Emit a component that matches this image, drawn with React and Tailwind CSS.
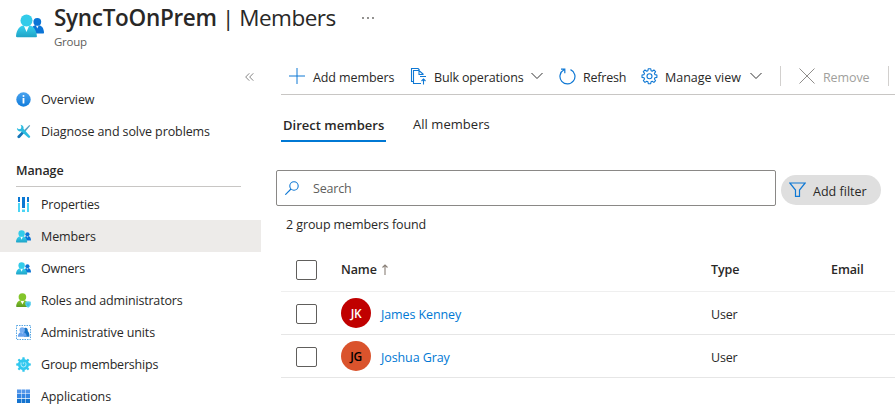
import React from "react";

function PeopleIcon({ className, id }) {
  return (
    <svg viewBox="0 0 28 24" className={className}>
      <defs>
        <linearGradient id={`${id}-front`} x1="0" y1="0" x2="0" y2="1">
          <stop offset="0" stopColor="#38d4f2" />
          <stop offset="1" stopColor="#1fa3c6" />
        </linearGradient>
      </defs>
      <path d="M15 19.500h12c.7 0 1-.4 1-1-.4-4.600-2.200-7.500-6.800-7.500-3.500 0-5.400 1.800-6.200 5z" fill="#0a74d6" />
      <path d="M19.800 11.300l1.500 3.200 1.500-3.200z" fill="#fff" />
      <circle cx="21.300" cy="7.800" r="3.900" fill="#0a74d6" />
      <path d="M1.200 23.200h18.600c.8 0 1.200-.5 1.100-1.300C20.200 15.500 17.500 11 10.500 11S.8 15.500 0 21.900c-.1.800.4 1.300 1.200 1.300z" fill={`url(#${id}-front)`} />
      <path d="M8 12l2.500 6 2.500-6z" fill="#fff" />
      <circle cx="10.500" cy="6.500" r="6" fill="#33cbe9" />
    </svg>
  );
}

function InfoIcon() {
  return (
    <svg viewBox="0 0 15 15" className="h-[15px] w-[15px]">
      <defs>
        <linearGradient id="info" x1="0" y1="0" x2="0" y2="1">
          <stop offset="0" stopColor="#4ba3ee" />
          <stop offset="1" stopColor="#0f7bdb" />
        </linearGradient>
      </defs>
      <circle cx="7.500" cy="7.500" r="7.200" fill="url(#info)" />
      <circle cx="7.500" cy="4" r="1" fill="#fff" />
      <rect x="6.600" y="6" width="1.800" height="5.600" rx=".4" fill="#fff" />
    </svg>
  );
}

function ToolsIcon() {
  return (
    <svg viewBox="0 0 15 15" className="h-[15px] w-[15px]">
      <path d="M13.300.9l.9.900-4.800 5.700-1.300-1.300z" fill="#5a9fc0" />
      <path d="M7.500 6l1.800 1.800-5.400 6c-.6.600-1.500.6-2.100 0s-.6-1.500 0-2.100z" fill="#1475b8" />
      <path d="M4.500.7c2.200.2 3.500 2 3 4l6.400 7.200c.5.500.4 1.200-.1 1.700-.5.500-1.200.500-1.700 0L5 7.300C3 7.800.9 6.400.9 4l2 1.300 2-.5.500-2z" fill="#2bbbe0" />
    </svg>
  );
}

function PropertiesIcon() {
  return (
    <svg viewBox="0 0 15 15" className="h-[15px] w-[15px]">
      <path d="M2 0h2v5H2zM6 0h3v11H6zM11 0h2v5h-2z" fill="#0b78d4" />
      <path d="M2 6h2v9H2zM6 12.500h3V15H6zM11 6h2v9h-2z" fill="#4bd5f5" />
    </svg>
  );
}

function RolesIcon() {
  return (
    <svg viewBox="0 0 15 15" className="h-[15px] w-[15px]">
      <defs>
        <linearGradient id="roles" x1="0" y1="0" x2="0" y2="1">
          <stop offset="0" stopColor="#8ccb2c" />
          <stop offset="1" stopColor="#5b9a20" />
        </linearGradient>
      </defs>
      <path d="M.9 14h11c.5 0 .7-.3.700-.8C12.200 9.500 10.500 7 6.400 7S.6 9.500.1 13.200c0 .500.300.8.800.8z" fill="url(#roles)" />
      <path d="M4.600 7.700l1.800 3.900 1.800-3.900z" fill="#fff" />
      <circle cx="6.400" cy="4" r="3.800" fill="#83c52a" />
      <path d="M9.300 8.800c2-.7 3.700-.7 5.500 0v2.500c0 1.500-1.300 2.700-2.700 3.500-1.500-.8-2.800-2-2.800-3.500z" fill="#53cdea" />
      <path d="M10.500 11h3M11 12.200h2" stroke="#1b9ccc" strokeWidth=".5" />
    </svg>
  );
}

function UnitsIcon() {
  return (
    <svg viewBox="0 0 15 15" className="h-[15px] w-[15px]">
      <rect x=".5" y=".5" width="14" height="14" fill="none" stroke="#5aa8e4" strokeDasharray="1.500 1" />
      <path d="M7.500 3.500c2.500-1.800 4.900.3 4.200 2.500 1.300 1 1.800 3 1.700 5.700H8z" fill="#1672c4" />
      <circle cx="6.200" cy="5" r="2.700" fill="#77aef2" />
      <path d="M1.800 11.700C2 9 3.400 7 6.200 7s4.400 2 4.600 4.700z" fill="#66a2ee" />
      <path d="M5.400 7.600l.8 1.400.9-1.400z" fill="#b5d3fa" />
    </svg>
  );
}

function MembershipIcon() {
  return (
    <svg viewBox="0 0 15 15" className="h-[15px] w-[15px]">
      <g fill="#32c8ee">
        <circle cx="7.500" cy="7.500" r="5.500" />
        <rect x="6.300" y=".2" width="2.400" height="14.600" rx=".6" />
        <rect x=".2" y="6.300" width="14.600" height="2.400" rx=".6" />
        <rect x="6.300" y=".2" width="2.400" height="14.600" rx=".6" transform="rotate(45 7.500 7.500)" />
        <rect x="6.300" y=".2" width="2.400" height="14.600" rx=".6" transform="rotate(-45 7.500 7.500)" />
      </g>
      <path d="M5 5.500v2a2.500 2.500 0 0 0 5 0c0-1-.4-1.800-1.200-2.300M7.300 5.300v1.900" fill="none" stroke="#c5f2ff" strokeWidth=".9" />
    </svg>
  );
}

function AppsIcon() {
  return (
    <svg viewBox="0 0 15 15" className="h-[15px] w-[15px]">
      <path d="M1 .5h4v4H1zM5.500.5h4v4h-4zM10 .5h4v4h-4z" fill="#5296ea" />
      <path d="M1 5.100h4v4H1zM5.500 5.100h4v4h-4zM10 5.100h4v4h-4z" fill="#3485e2" />
      <path d="M1 9.700h4v4.300H1zM5.500 9.700h4v4.300h-4zM10 9.700h4v4.300h-4z" fill="#1473cf" />
    </svg>
  );
}

function Chevron() {
  return (
    <svg viewBox="0 0 12 8" className="h-2 w-3" fill="none" stroke="#333" strokeWidth="1">
      <path d="M.5 1L6 6.500 11.500 1" />
    </svg>
  );
}

function NavItem({ icon, label, active, tracking = "" }) {
  return (
    <li className={`flex h-8 w-[261px] items-center pl-4 ${active ? "bg-[#edebe9]" : ""}`}>
      <span className="flex w-[25px] shrink-0">{icon}</span>
      <span className={`whitespace-nowrap pt-px ${tracking}`}>{label}</span>
    </li>
  );
}

function Sidebar() {
  return (
    <nav className="w-[270px] shrink-0">
      <div className="flex h-[30px] items-center pl-[245px] pt-[17px]">
        <svg viewBox="0 0 9 8" className="h-2 w-[9px] shrink-0" fill="none" stroke="#777" strokeWidth=".9">
          <path d="M4.300.3L.7 4l3.600 3.700M8.300.3L4.700 4l3.600 3.700" />
        </svg>
      </div>
      <ul>
        <NavItem icon={<InfoIcon />} label="Overview" />
        <NavItem icon={<ToolsIcon />} label="Diagnose and solve problems" />
      </ul>
      <div className="ml-4 mt-[7px] flex h-[33px] w-[225px] items-center border-b border-[#c8c6c4] pt-[2px] font-semibold">
        Manage
      </div>
      <ul className="mt-px">
        <NavItem icon={<PropertiesIcon />} label="Properties" tracking="tracking-[-0.2px]" />
        <NavItem active icon={<PeopleIcon id="members" className="h-[13px] w-[15px]" />} label="Members" />
        <NavItem icon={<PeopleIcon id="owners" className="h-[13px] w-[15px]" />} label="Owners" tracking="tracking-[-0.2px]" />
        <NavItem icon={<RolesIcon />} label="Roles and administrators" tracking="tracking-[-0.18px]" />
        <NavItem icon={<UnitsIcon />} label="Administrative units" tracking="tracking-[-0.13px]" />
        <NavItem icon={<MembershipIcon />} label="Group memberships" tracking="tracking-[-0.2px]" />
        <NavItem icon={<AppsIcon />} label="Applications" />
      </ul>
    </nav>
  );
}

function Toolbar() {
  return (
    <div className="ml-[11px] flex h-[42px] items-center whitespace-nowrap border-b border-[#c8c6c4] pt-[5px]">
      <div className="flex w-[129px] shrink-0 items-center pl-2">
        <svg viewBox="0 0 16 16" className="mr-2 h-4 w-4" stroke="#0f78d4" strokeWidth="1">
          <path d="M8 0v16M0 8h16" />
        </svg>
        <span className="pt-[3px]">Add members</span>
      </div>
      <div className="flex w-[149px] shrink-0 items-center">
        <svg viewBox="0 0 17 17" className="mr-[7px] h-[17px] w-[17px]" fill="none" stroke="#0f78d4" strokeWidth="1.100">
          <path d="M3.500 13.500h-2V.5H8l1.500 1.500M11 15.500H3.500v-13H9l4.500 4M9 2.500v4h4.500M13.500 16.500V11M11.500 13l2-2 2 2M10 8.500h6" />
        </svg>
        <span className="w-[97px] pt-[3px] tracking-[-0.15px]">Bulk operations</span>
        <Chevron />
      </div>
      <div className="flex w-[82px] shrink-0 items-center">
        <svg viewBox="0 0 17 17" className="mr-[7px] h-[17px] w-[17px]" fill="none" stroke="#0f78d4" strokeWidth="1.200">
          <path d="M11.500 1.600A7.500 7.500 0 1 1 5 1.800M2 1.200h3.800v4" />
        </svg>
        <span className="pt-[3px] tracking-[-0.2px]">Refresh</span>
      </div>
      <div className="flex w-[139px] shrink-0 items-center">
        <svg viewBox="0 0 17 17" className="mr-[7px] h-[17px] w-[17px]" fill="none" stroke="#0f78d4" strokeWidth="1.100" strokeLinejoin="round">
          <path d="M7.300.7h2.400l.4 2 1.100.5 1.700-1.200 1.700 1.700-1.200 1.700.5 1.200 2 .4v2.400l-2 .4-.5 1.200 1.200 1.700-1.700 1.700-1.700-1.200-1.100.5-.4 2H7.300l-.4-2-1.200-.5L4 14.400l-1.700-1.700L3.500 11 3 9.800l-2-.4V7l2-.4.5-1.200-1.200-1.700L4 2l1.700 1.200 1.200-.5z" />
          <circle cx="8.500" cy="8.200" r="2.500" />
        </svg>
        <span className="w-[85px] pt-[3px] tracking-[0px]">Manage view</span>
        <Chevron />
      </div>
      <div className="flex h-5 w-[109px] shrink-0 items-center border-x border-[#d2d0ce] pl-[18px] text-[#a19f9d]">
        <svg viewBox="0 0 16 16" className="mr-2 h-4 w-4 shrink-0" stroke="#8f8d8b" strokeWidth="1">
          <path d="M.5.5l15 15M15.500.5l-15 15" />
        </svg>
        <span className="pt-[3px]">Remove</span>
      </div>
    </div>
  );
}

function Checkbox() {
  return <span className="h-5 w-[21px] shrink-0 rounded-xs border border-[#605e5c] bg-white" />;
}

function MemberRow({ initials, name, avatar }) {
  return (
    <div className="flex h-[43px] items-center border-b border-[#e6e6e6] pl-[15px] pt-[2px]">
      <Checkbox />
      <span className={`mb-[3px] ml-6 flex h-[30px] w-[30px] shrink-0 items-center justify-center rounded-full pt-[2px] text-[12px] font-semibold tracking-[-0.4px] ${avatar}`}>
        {initials}
      </span>
      <span className="w-[340px] shrink-0 pl-[10px] pt-[2px] text-[#0078d4]">{name}</span>
      <span className="pt-[2px] tracking-[-0.2px]">User</span>
    </div>
  );
}

function Members() {
  return (
    <main className="min-w-0 flex-1">
      <Toolbar />
      <div className="ml-[11px] flex h-[47px]">
        <div className="flex w-[105px] items-center whitespace-nowrap border-b-2 border-[#0078d4] pl-[2px] pt-[14px] text-[13px] font-semibold tracking-[0.02px]">
          Direct members
        </div>
        <div className="flex items-center whitespace-nowrap pl-[27px] pt-[10px] text-[13px] tracking-[0.04px]">All members</div>
      </div>
      <div className="ml-[6px] mt-[28px] flex h-9 items-center">
        <div className="flex h-9 w-[500px] shrink-0 items-center rounded-xs border border-[#8a8886] pl-2 text-[#605e5c]">
          <svg viewBox="0 0 14 14" className="mr-[14px] h-[14px] w-[14px]" fill="none" stroke="#0f78d4" strokeWidth="1.100">
            <circle cx="9" cy="5" r="4.200" />
            <path d="M6 8L.3 13.700" />
          </svg>
          <span className="pt-[2px] tracking-[-0.2px]">Search</span>
        </div>
        <div className="ml-[5px] mt-[3px] flex h-[30px] w-[100px] shrink-0 items-center rounded-full bg-[#dfdfdf] pl-2">
          <svg viewBox="0 0 17 15" className="mr-[7px] h-[15px] w-[17px] shrink-0" fill="none" stroke="#0f78d4" strokeWidth="1.200">
            <path d="M.8 1h15.400L10.500 8v6.300h-4V8z" />
          </svg>
          <span className="whitespace-nowrap pt-[4px] tracking-[0.02px]">Add filter</span>
        </div>
      </div>
      <div className="ml-4 flex h-[37px] items-center">2 group members found</div>
      <div className="ml-[11px]">
        <div className="flex h-[49px] items-center border-b border-[#efefef] pl-[15px] pt-[6px] font-semibold">
          <span className="-mt-px flex"><Checkbox /></span>
          <span className="flex w-[394px] items-center pl-6">
            <span className="w-[41px]">Name</span>
            <svg viewBox="0 0 6 11" className="mb-px h-[11px] w-[6px]" fill="none" stroke="#8a8078" strokeWidth="1.100">
              <path d="M3 11V1M.5 3.500L3 1l2.500 2.500" />
            </svg>
          </span>
          <span className="w-[120px]">Type</span>
          <span>Email</span>
        </div>
        <MemberRow initials="JK" name="James Kenney" avatar="bg-[#c00000] text-white" />
        <MemberRow initials="JG" name="Joshua Gray" avatar="bg-[#da532c] text-black" />
      </div>
    </main>
  );
}

export default function App() {
  return (
    <div className="h-[412px] w-[895px] overflow-hidden bg-white font-['Open_Sans','Noto_Sans',sans-serif] text-[12.5px] leading-4 tracking-[-0.1px] text-[#292827]">
      <header className="flex h-[53px] pl-4">
        <PeopleIcon id="title" className="mt-[14px] h-6 w-7 shrink-0" />
        <div className="ml-[10px]">
          <h1 className="mt-[2px] flex h-8 items-center whitespace-nowrap text-[22.5px]">
            <span className="w-[162px] font-semibold tracking-[-0.3px]">SyncToOnPrem</span>
            <span className="w-[146px] pl-[6px] tracking-[-0.5px]">| Members</span>
            <svg viewBox="0 0 12 2" className="h-[2px] w-3" fill="#605e5c">
              <circle cx="1" cy="1" r=".9" />
              <circle cx="6" cy="1" r=".9" />
              <circle cx="11" cy="1" r=".9" />
            </svg>
          </h1>
          <p className="text-[11.5px] tracking-[-0.25px] text-[#605e5c]">Group</p>
        </div>
      </header>
      <div className="flex">
        <Sidebar />
        <Members />
      </div>
    </div>
  );
}
